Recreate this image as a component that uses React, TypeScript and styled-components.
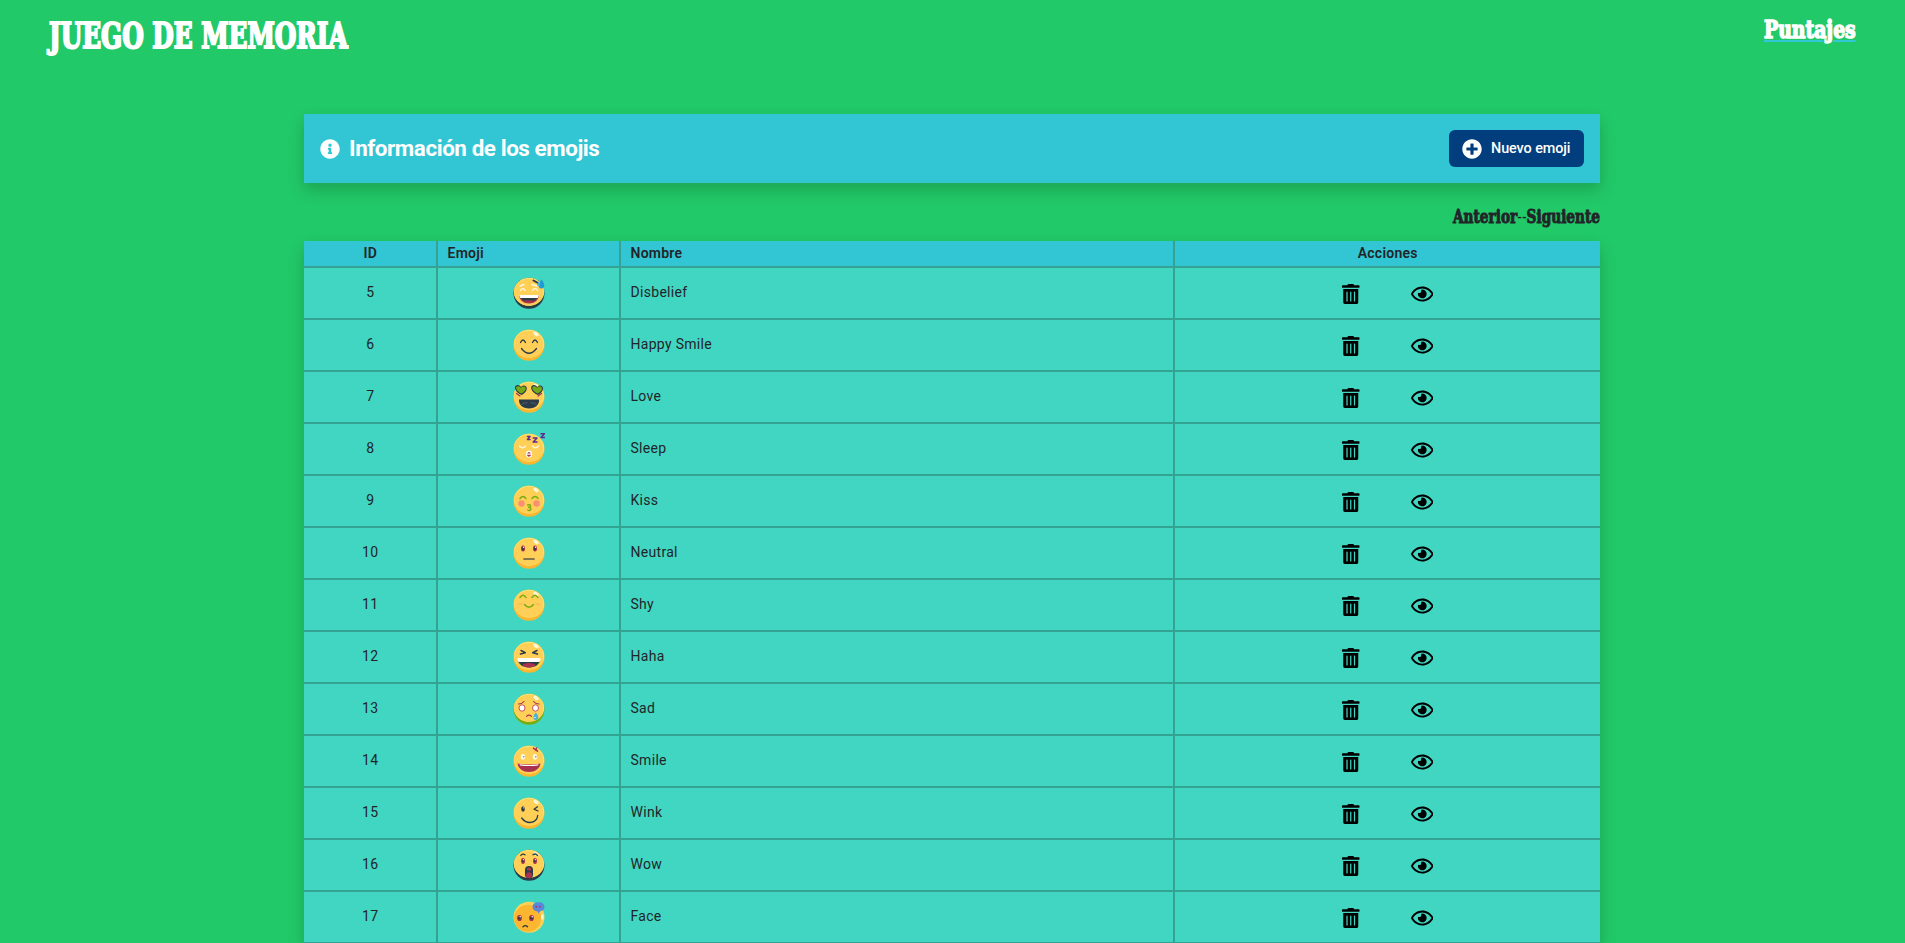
import React from "react";
import styled, { createGlobalStyle } from "styled-components";
import { FaInfoCircle, FaPlusCircle, FaRegEye, FaTrashAlt } from "react-icons/fa";

const GlobalStyle = createGlobalStyle`
  * { box-sizing: border-box; }
  body {
    margin: 0;
    height: 943px;
    overflow: hidden;
    background: #22c968;
    color: #212529;
    font-family: Roboto, "Liberation Sans", sans-serif;
  }
  h1, h2 { margin: 0; }
`;

const Header = styled.header`
  display: flex;
  justify-content: space-between;
  height: 114px;
  padding: 15px 49px 0 49px;
`;

const Display = styled.span<{ $size: number; $squeeze: number; $origin?: string; $stroke?: number }>`
  display: block;
  white-space: nowrap;
  font: bold ${(p) => p.$size}px "DejaVu Serif", "Liberation Serif", serif;
  font-stretch: condensed;
  line-height: 1.2;
  -webkit-text-stroke: ${(p) => p.$stroke ?? 1}px currentColor;
  transform: scaleX(${(p) => p.$squeeze});
  transform-origin: ${(p) => p.$origin ?? "left"} center;
`;

const Brand = styled.h1`
  color: #fff;
  font-weight: inherit;
`;

const ScoresLink = styled.a`
  color: #fff;
  text-decoration: underline #33c6d4 2px;
  text-underline-offset: 2px;
`;

const Page = styled.main`
  width: 1296px;
  margin-left: 304px;
`;

const Banner = styled.section`
  display: flex;
  align-items: center;
  justify-content: space-between;
  height: 69px;
  padding: 0 16px;
  background: #32c5d3;
  box-shadow: 0 8px 16px rgba(0, 0, 0, 0.15), 0 4px 12px rgba(0, 0, 0, 0.04);
`;

const BannerTitle = styled.h2`
  display: flex;
  align-items: center;
  gap: 9px;
  color: #fff;
  font-size: 22.4px;
  font-weight: 700;
  letter-spacing: -0.42px;
  line-height: 28px;
  padding-bottom: 1px;
  svg { width: 20px; height: 20px; margin-top: 2px; }
`;

const NewButton = styled.button`
  display: flex;
  align-items: center;
  gap: 9px;
  width: 135px;
  height: 37px;
  padding: 0 13px;
  border: 0;
  border-radius: 6px;
  background: #023e7d;
  color: #fff;
  font: 500 14.4px Roboto, sans-serif;
  letter-spacing: -0.08px;
  white-space: nowrap;
  svg { flex: none; width: 20px; height: 20px; margin-top: 1px; }
`;

const Pager = styled.nav`
  display: flex;
  justify-content: flex-end;
  height: 58px;
  padding-top: 23px;
`;

const Dashes = styled.span`
  font-weight: normal;
  -webkit-text-stroke: 0;
`;

const Table = styled.div`
  background: #41d6c2;
  box-shadow: 0 8px 16px rgba(0, 0, 0, 0.15), 0 4px 12px rgba(0, 0, 0, 0.04);
`;

const Row = styled.div<{ $head?: boolean }>`
  display: grid;
  grid-template-columns: 134px 183px 554px 425px;
  height: ${(p) => (p.$head ? 27 : 52)}px;
  background: ${(p) => (p.$head ? "#32c5d3" : "#41d6c2")};
  font-size: 14px;
  font-weight: ${(p) => (p.$head ? 600 : 400)};
  letter-spacing: ${(p) => (p.$head ? 0.25 : 0.3)}px;
`;

const Cell = styled.div<{ $center?: boolean; $gap?: number }>`
  display: flex;
  align-items: center;
  justify-content: ${(p) => (p.$center ? "center" : "flex-start")};
  gap: ${(p) => p.$gap ?? 0}px;
  padding: 0 9px 0 9.5px;
  border-bottom: 2px solid #35a394;
  &:not(:last-child) { border-right: 2px solid #35a394; }
`;

const Label = styled.span`
  padding-bottom: 2px;
`;

const Face = styled.svg`
  display: block;
  width: 32px;
  height: 32px;
`;

const ActionIcon = styled.span<{ $width: number }>`
  display: flex;
  width: ${(p) => p.$width}px;
  margin-top: 2px;
  color: #000;
  svg { width: 100%; height: 20px; }
`;

const DARK = "#2b3b47";

type HeadProps = { rim?: string; fill?: string; shine?: boolean; children?: React.ReactNode };

function Head({ rim = "#fdb62f", fill = "#ffcf58", shine = true, children }: HeadProps) {
  return (
    <Face viewBox="0 0 32 32">
      <circle cx="16" cy="16.2" r="15.5" fill={rim} />
      <ellipse cx="16" cy="14.8" rx="15.2" ry="14" fill="#ffe06a" />
      <ellipse cx="15.7" cy="15.4" rx="14.5" ry="13.3" fill={fill} />
      {shine && <ellipse cx="23" cy="5" rx="3" ry="1.7" transform="rotate(35 23 5)" fill="#fff6d5" />}
      {children}
    </Face>
  );
}

const line = (d: string, stroke = DARK, w = 1.3) => (
  <path d={d} fill="none" stroke={stroke} strokeWidth={w} strokeLinecap="round" strokeLinejoin="round" />
);

const faces: Record<string, React.ReactNode> = {
  disbelief: (
    <Head rim={DARK} shine={false}>
      {line("M7 9 11 7.5M19 7.5 24 9M7.5 13.5Q10 9.5 12 13.5M19.5 13.5Q22 9.5 24.5 13.5", "#fff7d6", 1.4)}
      {line("M20.5 3.5 25 6", DARK, 2)}
      <path d="M6.2 18h19.6c0 5.5-4.5 8.5-9.8 8.5S6.2 23.5 6.2 18z" fill="#a8324d" />
      <path d="M6.2 18h19.6l-.8 3H7z" fill="#fff" />
      <path d="M8 21h16l-2 2.500H10z" fill={DARK} />
      <path d="M28.5 2.5c4 4.5 3.4 9-.2 9-3.8 0-3-5 .2-9z" fill="#219bd3" />
      <path d="M25.5 4.5c2 2.5 2 4.7.2 4.700-2 0-1.700-2.500-.2-4.700z" fill="#40b5df" />
    </Head>
  ),
  happy: <Head>{line("M7.5 13.5Q10 8.5 12.5 13.5M19.5 13.5Q22 8.5 24.5 13.5M8.5 19.5Q16 29 23.5 19.5")}</Head>,
  love: (
    <Head>
      <path d="M2 6c1.5-3 5-2 6 0 1.5-2.5 5.5-2 5.8 1 .2 3.5-3.3 6-5 7C6 13 1.5 10 2 6z" fill={DARK} />
      <path d="M18.2 6c1.5-3 5-2 6 0 1.5-2.5 5.5-2 5.8 1 .2 3.5-3.3 6-5 7-2.800-1-7.300-4-6.800-8z" fill={DARK} />
      <path d="M3 6.5c1-2 4-1.5 5 .5 1-2 4.5-2 4.8.2.2 2.5-2.8 4.5-4.5 5.3C6 11.5 2.8 9 3 6.5z" fill="#75a817" />
      <path d="M19.2 6.5c1-2 4-1.5 5 .5 1-2 4.5-2 4.8.2.2 2.5-2.8 4.5-4.5 5.3-2.300-1-5.500-3.500-5.300-6z" fill="#75a817" />
      {line("M3.5 12.5 7 15M28.5 12.5 25 15", "#a8324d", 1.2)}
      <path d="M6 18.5h20c.5 5-3.500 9-10 9s-10.500-4-10-9z" fill={DARK} />
      {line("M8.5 23.5Q10 21.5 14 21.7M18 21.7Q22 21.5 23.5 23.5", "#52606a", 1)}
    </Head>
  ),
  sleep: (
    <Head shine={false}>
      {line("M6.5 13Q9.5 16.5 12.5 13M19.5 13Q22.5 16.5 25.5 13", "#fff6d5", 1.4)}
      <ellipse cx="16" cy="21" rx="3" ry="3.6" fill="#fff" />
      <path d="M14 20.500q2-3 4 0z" fill="#a8324d" />
      <path d="M13.800 21.800h4.400q-2.200 4-4.400 0z" fill="#a8324d" />
      {line("M14.5 3.5H17L14.5 6.5H17M20.2 5H24L20.2 9H24M28 0.7H31.5L28 4.5H31.5", "#622a91", 1.5)}
    </Head>
  ),
  kiss: (
    <Head>
      <circle cx="8.5" cy="18.5" r="3.2" fill="#fb8f74" />
      <circle cx="23.5" cy="18.5" r="3.2" fill="#fb8f74" />
      {line("M7 13.5Q10 9.5 13 13.5M19 13.5Q22 9.5 25 13.5M14.7 20Q18 19 17.5 21.5 17 22.5 15.5 22.3 18.5 22.5 17.7 24.7 16.5 26 14.7 25", "#78ad12", 1.4)}
    </Head>
  ),
  neutral: (
    <Head>
      <ellipse cx="10" cy="11.5" rx="2" ry="3" fill="#a8324d" />
      <ellipse cx="22" cy="11.5" rx="2" ry="3" fill="#a8324d" />
      <ellipse cx="10" cy="11.8" rx="1" ry="1.800" fill={DARK} />
      <ellipse cx="22" cy="11.8" rx="1" ry="1.800" fill={DARK} />
      <circle cx="10.6" cy="10.2" r=".7" fill="#fff" />
      <circle cx="22.6" cy="10.2" r=".7" fill="#fff" />
      {line("M11 22H21", "#5c594c", 1.7)}
    </Head>
  ),
  shy: (
    <Head>
      <ellipse cx="7.5" cy="15" rx="2.500" ry="1" fill="#fcbd5c" />
      <ellipse cx="24.5" cy="15" rx="2.500" ry="1" fill="#fcbd5c" />
      {line("M7 8.5Q10 4 13 8.5M19 8.5Q22 4 25 8.5M11.5 15.5Q16 21 20.5 15.5", "#78ad12", 1.4)}
    </Head>
  ),
  haha: (
    <Head>
      {line("M8 9.5 12.3 11.7 7.5 13M24 9.5 19.7 11.7 24.5 13", DARK, 1.5)}
      <path d="M5 17.5h22c.3 5.5-4.500 9-11 9S4.700 23 5 17.500z" fill={DARK} />
      <path d="M5 17h22c.8 0 .5 3-.8 4H5.8c-1.300-1-1.600-4-.8-4z" fill="#fff" />
      <ellipse cx="16" cy="24.2" rx="6.5" ry="2.2" fill="#a8324d" />
      {line("M5.8 22 9 25M26.2 22 23 25", "#5b9e22", 1)}
    </Head>
  ),
  sad: (
    <Head rim="#78ad12">
      <ellipse cx="9" cy="15" rx="3" ry="3.2" fill="#fff" stroke="#c85160" />
      <ellipse cx="22.5" cy="15" rx="3" ry="3.2" fill="#fff" stroke="#c85160" />
      {line("M5.5 11Q9 11 11 8.5M26 11Q22.5 11 20.5 8.5M13.5 23.3Q16 20.8 18.5 23.3", "#a8324d", 1.1)}
      <path d="M22.8 19.5c3.8 4.5 2.8 7.500 0 7.500s-3.500-3 0-7.500z" fill="#40b5df" />
      <circle cx="22" cy="24.5" r=".8" fill="#d1f3fc" />
    </Head>
  ),
  smile: (
    <Head shine={false}>
      <ellipse cx="10" cy="11.8" rx="2.2" ry="2.9" fill="#fffbe9" />
      <ellipse cx="22" cy="11.8" rx="2.2" ry="2.9" fill="#fffbe9" />
      <circle cx="10.8" cy="11.8" r=".8" fill="#8c7165" />
      <circle cx="22.8" cy="11.8" r=".8" fill="#8c7165" />
      {line("M20.5 3.2 22.7 5M23.5 3 22.7 5 24.5 6", "#a8324d", 1.6)}
      <path d="M4.5 18.5Q16 20.5 27.5 18.5C26.5 24 22 27 16 27S5.5 24 4.5 18.5z" fill="#a8324d" />
      <path d="M6.5 19.3Q16 20.5 25.5 19.3L25 20.500Q16 21.500 7 20.500z" fill="#fff" />
    </Head>
  ),
  wink: (
    <Head>
      <ellipse cx="10" cy="12" rx="1.8" ry="2.7" fill={DARK} />
      <circle cx="10.7" cy="10.8" r=".6" fill="#fff" />
      {line("M24.5 9.8 21 12.2 25 14M8.7 21Q12 25.5 17 25.5 24 25 24.7 18.5")}
    </Head>
  ),
  wow: (
    <Head rim={DARK}>
      <ellipse cx="10" cy="12" rx="2" ry="2.9" fill="#a8324d" />
      <ellipse cx="22" cy="12" rx="2" ry="2.9" fill="#a8324d" />
      <circle cx="10" cy="12" r="1.1" fill={DARK} />
      <circle cx="22" cy="12" r="1.1" fill={DARK} />
      <circle cx="10.5" cy="10.7" r=".6" fill="#fff" />
      <circle cx="22.5" cy="10.7" r=".6" fill="#fff" />
      {line("M7.8 6.5Q9.5 4 12 5.8M20 5.8Q22.5 4 24.5 6.5")}
      <rect x="12" y="17" width="8" height="12.5" rx="4" fill={DARK} />
      <ellipse cx="16" cy="26.2" rx="3" ry="3" fill="#a8324d" />
      <path d="M14 19.5q2-1.800 4 0v2h-4z" fill="#a8324d" />
    </Head>
  ),
  face: (
    <Face viewBox="0 0 32 32">
      <circle cx="16" cy="16.2" r="15.5" fill="#ffd155" />
      <circle cx="14.7" cy="17.2" r="13.5" fill="#fdb62f" />
      <ellipse cx="29.3" cy="16" rx="1.3" ry="3" fill="#fff5d2" />
      {[6.5, 18.5].map((x) => (
        <g key={x}>
          <ellipse cx={x} cy="17" rx="2.4" ry="3.1" fill="#a8324d" />
          <circle cx={x} cy="17.3" r="1.3" fill={DARK} />
          <circle cx={x + 0.7} cy="15.8" r=".7" fill="#fff" />
        </g>
      ))}
      {line("M10 25.7Q12.5 23.5 14.5 25.7")}
      <path d="M25.5 1.2c3.8 0 6 2 6 4.600s-2 4.300-4.500 4.600L25.500 12.500 24.500 10.500c-3-.4-5-2-5-4.700s2.200-4.600 6-4.600z" fill="#5c86dc" />
      {line("M23 5.7H23.6M26.5 5.7H27.1", "#b0304f", 1.4)}
    </Face>
  ),
};

const rows: [number, string, string][] = [
  [5, "Disbelief", "disbelief"],
  [6, "Happy Smile", "happy"],
  [7, "Love", "love"],
  [8, "Sleep", "sleep"],
  [9, "Kiss", "kiss"],
  [10, "Neutral", "neutral"],
  [11, "Shy", "shy"],
  [12, "Haha", "haha"],
  [13, "Sad", "sad"],
  [14, "Smile", "smile"],
  [15, "Wink", "wink"],
  [16, "Wow", "wow"],
  [17, "Face", "face"],
];

export default function App() {
  return (
    <>
      <GlobalStyle />
      <Header>
        <Brand>
          <Display $size={35} $squeeze={0.785} $stroke={2}>JUEGO DE MEMORIA</Display>
        </Brand>
        <Display $size={25} $squeeze={0.836} $origin="right" $stroke={1.5}>
          <ScoresLink>Puntajes</ScoresLink>
        </Display>
      </Header>
      <Page>
        <Banner>
          <BannerTitle><FaInfoCircle />Información de los emojis</BannerTitle>
          <NewButton><FaPlusCircle />Nuevo emoji</NewButton>
        </Banner>
        <Pager>
          <Display $size={18} $squeeze={0.845} $origin="right" $stroke={0.9}>
            Anterior<Dashes>--</Dashes>Siguiente
          </Display>
        </Pager>
        <Table>
          <Row $head>
            <Cell $center><Label>ID</Label></Cell>
            <Cell><Label>Emoji</Label></Cell>
            <Cell><Label>Nombre</Label></Cell>
            <Cell $center><Label>Acciones</Label></Cell>
          </Row>
          {rows.map(([id, name, face]) => (
            <Row key={id}>
              <Cell $center><Label>{id}</Label></Cell>
              <Cell $center>{faces[face]}</Cell>
              <Cell><Label>{name}</Label></Cell>
              <Cell $center $gap={51}>
                <ActionIcon $width={17.5}><FaTrashAlt /></ActionIcon>
                <ActionIcon $width={22.5}><FaRegEye /></ActionIcon>
              </Cell>
            </Row>
          ))}
        </Table>
      </Page>
    </>
  );
}
